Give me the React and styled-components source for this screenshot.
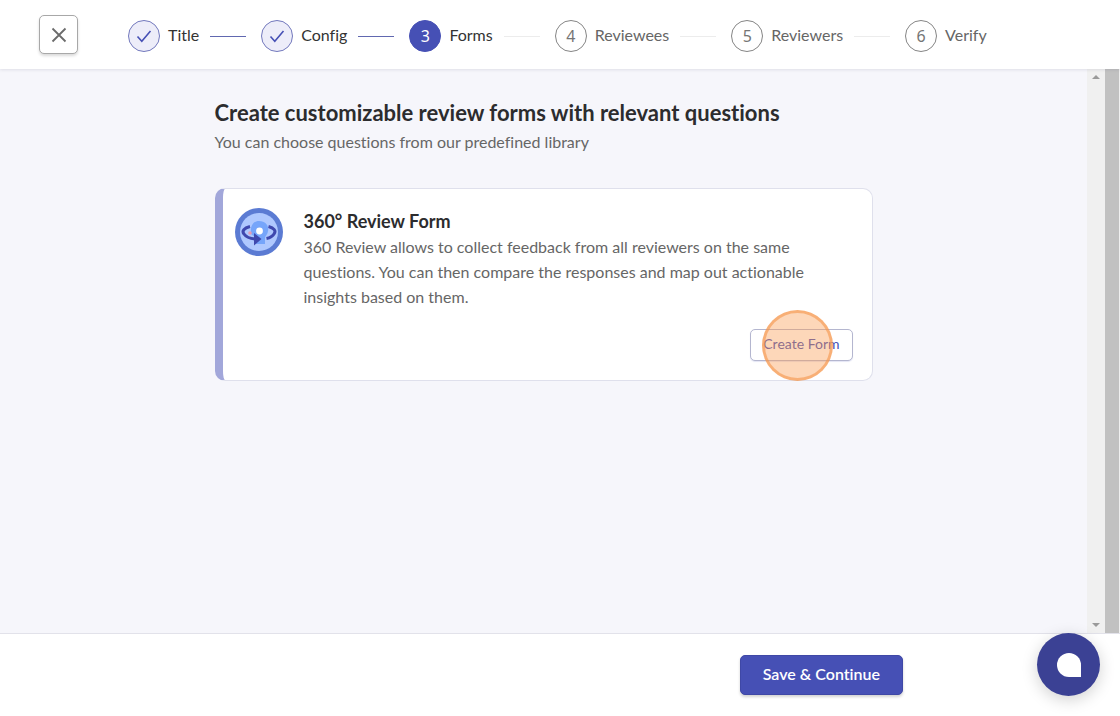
import React from "react";
import styled, { createGlobalStyle } from "styled-components";

const steps = [
  { label: "Title", state: "done" },
  { label: "Config", state: "done" },
  { label: "Forms", state: "active" },
  { label: "Reviewees", state: "todo" },
  { label: "Reviewers", state: "todo" },
  { label: "Verify", state: "todo" },
];

const App = () => {
  return (
    <Page>
      <GlobalStyle />
      <Header>
        <CloseButton type="button" aria-label="Close">
          <svg width="16" height="16" viewBox="0 0 16 16" aria-hidden="true">
            <path d="M1.5 1.5L14.5 14.5M14.5 1.5L1.5 14.5" stroke="#6b6b6b" strokeWidth="1.8" fill="none" />
          </svg>
        </CloseButton>
        <Stepper>
          {steps.map((step, index) => (
            <Step key={step.label}>
              <StepCircle $state={step.state}>
                {step.state === "done" ? <CheckIcon /> : index + 1}
              </StepCircle>
              <StepLabel $state={step.state}>{step.label}</StepLabel>
              {index < steps.length - 1 && <StepLine $state={step.state} />}
            </Step>
          ))}
        </Stepper>
      </Header>

      <Body>
        <Main>
          <Column>
            <Title>Create customizable review forms with relevant questions</Title>
            <Subtitle>You can choose questions from our predefined library</Subtitle>
            <Card>
              <ReviewIcon />
              <CardContent>
                <CardTitle>360° Review Form</CardTitle>
                <CardText>
                  360 Review allows to collect feedback from all reviewers on the
                  same questions. You can then compare the responses and map out
                  actionable insights based on them.
                </CardText>
                <CardActions>
                  <CreateButton type="button">Create Form</CreateButton>
                  <ClickMarker />
                </CardActions>
              </CardContent>
            </Card>
          </Column>
        </Main>
        <ScrollTrack>
          <Arrow $up />
          <Arrow />
        </ScrollTrack>
        <ScrollThumb />
      </Body>

      <Footer>
        <SaveButton type="button">Save &amp; Continue</SaveButton>
      </Footer>

      <ChatButton type="button" aria-label="Open chat">
        <svg width="24" height="24" viewBox="0 0 24 24" aria-hidden="true">
          <path d="M12 0A12 12 0 0 1 24 12V24H12A12 12 0 0 1 12 0Z" fill="#fff" />
        </svg>
      </ChatButton>
    </Page>
  );
};

const CheckIcon = () => (
  <svg width="16" height="16" viewBox="0 0 16 16" aria-hidden="true">
    <path d="M1.5 8.5L5.8 13.2L14.5 3" stroke="#4650b5" strokeWidth="1.6" fill="none" />
  </svg>
);

const ReviewIcon = () => (
  <IconSvg width="48" height="48" viewBox="0 0 48 48" aria-hidden="true">
    <circle cx="24" cy="24" r="24" fill="#5b7bd3" />
    <circle cx="24" cy="24" r="19" fill="#afc8fe" />
    <path d="M16 26C15 18 18 13 24 13C31 13 34 18 33 23C33 26 30 28 30 30V36H20V29Z" fill="#76a5fa" />
    <circle cx="15" cy="25" r="1.8" fill="#e59bb5" />
    <circle cx="24.5" cy="23" r="3.4" fill="#fff" />
    <path
      d="M15 18.5C9 20 6.5 23 9 26C11 29 15 30.5 20 31"
      stroke="#3f48ae"
      strokeWidth="3"
      fill="none"
    />
    <path d="M19 25L26.5 31L19 37.5Z" fill="#3f48ae" />
    <path
      d="M33.5 18.5C39 20 41.5 23 39 26C37.5 28.5 35 29.8 31.5 30.5"
      stroke="#3f48ae"
      strokeWidth="3"
      fill="none"
    />
  </IconSvg>
);

const GlobalStyle = createGlobalStyle`
  * {
    box-sizing: border-box;
  }

  body {
    margin: 0;
    font-family: Lato, "Liberation Sans", sans-serif;
    font-size: 16px;
    font-variant-ligatures: none;
    color: #2c2c2e;
    background: #fff;
  }

  button {
    font-family: inherit;
    font-variant-ligatures: none;
    cursor: pointer;
  }
`;

const Page = styled.div`
  min-height: 100vh;
  display: flex;
  flex-direction: column;
`;

const Header = styled.header`
  display: flex;
  align-items: center;
  gap: 50px;
  padding: 15px 39px;
  background: #fff;
  box-shadow: 0 1px 3px rgba(60, 60, 90, 0.12);
  z-index: 1;
`;

const CloseButton = styled.button`
  width: 39px;
  height: 39px;
  display: flex;
  align-items: center;
  justify-content: center;
  padding: 0;
  background: #fff;
  border: 1px solid #a8a8a8;
  border-radius: 5px;
  box-shadow: 0 2px 3px rgba(0, 0, 0, 0.15);
`;

const Stepper = styled.ol`
  display: flex;
  gap: 15px;
  margin: 0;
  padding: 3px 0 0;
  list-style: none;
`;

const Step = styled.li`
  display: flex;
  align-items: center;
`;

const circleColors = {
  done: { background: "#ededf9", border: "#7379bd", text: "#4650b5" },
  active: { background: "#4650b5", border: "#4650b5", text: "#fff" },
  todo: { background: "#fff", border: "#858585", text: "#757575" },
};

const StepCircle = styled.span`
  width: 32px;
  height: 32px;
  display: flex;
  align-items: center;
  justify-content: center;
  font-family: "Noto Sans", sans-serif;
  font-size: 16px;
  color: ${({ $state }) => circleColors[$state].text};
  background: ${({ $state }) => circleColors[$state].background};
  border: 1px solid ${({ $state }) => circleColors[$state].border};
  border-radius: 50%;
`;

const StepLabel = styled.span`
  margin: 0 11px 0 8px;
  padding-bottom: 2px;
  line-height: 24px;
  color: ${({ $state }) => ($state === "todo" ? "#666" : "#333")};
`;

const StepLine = styled.span`
  width: 36px;
  height: 1px;
  background: ${({ $state }) => ($state === "done" ? "#6168b0" : "#ececec")};
`;

const Body = styled.div`
  flex: 1;
  display: flex;
  background: #f6f6fb;
`;

const Main = styled.main`
  flex: 1;
  padding: 29px 24px;
`;

const Column = styled.div`
  max-width: 658px;
  margin: 0 auto;
`;

const Title = styled.h1`
  margin: 0;
  font-size: 22px;
  font-weight: 700;
  line-height: 30px;
`;

const Subtitle = styled.p`
  margin: 0 0 32px;
  line-height: 28px;
  color: #666;
`;

const Card = styled.section`
  display: flex;
  gap: 21px;
  padding: 19px;
  padding-left: 12px;
  background: #fff;
  border: 1px solid #dfe0ec;
  border-left: 8px solid #a2a7da;
  border-radius: 10px;
`;

const IconSvg = styled.svg`
  flex: none;
`;

const CardContent = styled.div`
  flex: 1;
`;

const CardTitle = styled.h2`
  margin: 0;
  font-size: 18px;
  font-weight: 700;
  line-height: 26px;
`;

const CardText = styled.p`
  margin: 0 0 20px;
  line-height: 25px;
  color: #666;
`;

const CardActions = styled.div`
  position: relative;
  display: flex;
  justify-content: flex-end;
`;

const CreateButton = styled.button`
  height: 32px;
  padding: 0 12px 3px;
  font-size: 14px;
  color: #4650b5;
  background: #fff;
  border: 1px solid #b4b6cf;
  border-radius: 5px;
  box-shadow: 0 1px 1px rgba(70, 80, 181, 0.15);
`;

const ClickMarker = styled.span`
  position: absolute;
  top: -19px;
  right: 20px;
  width: 71px;
  height: 71px;
  background: rgba(250, 155, 80, 0.4);
  border: 3px solid rgba(245, 150, 75, 0.6);
  border-radius: 50%;
  pointer-events: none;
`;

const ScrollTrack = styled.div`
  width: 18px;
  display: flex;
  flex-direction: column;
  align-items: center;
  justify-content: space-between;
  padding: 6px 0;
  background: #f0f0f0;
`;

const Arrow = styled.span`
  border: 4px solid transparent;
  border-top-width: ${({ $up }) => ($up ? 0 : 4)}px;
  border-bottom-width: ${({ $up }) => ($up ? 4 : 0)}px;
  border-top-color: #9a9a9a;
  border-bottom-color: #9a9a9a;
`;

const ScrollThumb = styled.div`
  width: 15px;
  background: #c1c1c1;
  border-right: 1px solid #f0f0f0;
`;

const Footer = styled.footer`
  display: flex;
  justify-content: flex-end;
  padding: 21px 217px 21px 24px;
  background: #fff;
  border-top: 1px solid #e2e2ea;
`;

const SaveButton = styled.button`
  height: 40px;
  padding: 0 22px 3px;
  font-size: 16px;
  font-weight: 600;
  color: #fff;
  background: #4650b5;
  border: 1px solid #3f48a6;
  border-radius: 5px;
  box-shadow: 0 2px 3px rgba(0, 0, 0, 0.18);
`;

const ChatButton = styled.button`
  position: fixed;
  right: 20px;
  bottom: 20px;
  width: 63px;
  height: 63px;
  display: flex;
  align-items: center;
  justify-content: center;
  padding: 0;
  background: #3b4194;
  border: 0;
  border-radius: 50%;
  box-shadow: 0 4px 16px rgba(0, 0, 0, 0.18);
  z-index: 2;
`;

export default App;
